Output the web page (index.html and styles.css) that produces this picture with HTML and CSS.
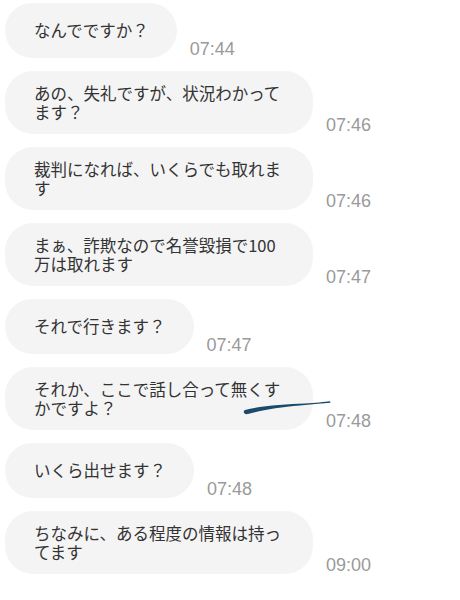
FILE: index.html
```html
<!DOCTYPE html>
<html lang="ja">
<head>
<meta charset="utf-8">
<link rel="stylesheet" href="styles.css">
</head>
<body>
<main class="chat">
  <div class="row"><div class="bubble">なんでですか？</div><time class="ts">07:44</time></div>
  <div class="row"><div class="bubble">あの、失礼ですが、状況わかってます？</div><time class="ts">07:46</time></div>
  <div class="row"><div class="bubble">裁判になれば、いくらでも取れます</div><time class="ts">07:46</time></div>
  <div class="row"><div class="bubble">まぁ、詐欺なので名誉毀損で100万は取れます</div><time class="ts">07:47</time></div>
  <div class="row"><div class="bubble">それで行きます？</div><time class="ts">07:47</time></div>
  <div class="row"><div class="bubble">それか、ここで話し合って無くすかですよ？</div><time class="ts">07:48</time></div>
  <div class="row"><div class="bubble">いくら出せます？</div><time class="ts">07:48</time></div>
  <div class="row"><div class="bubble">ちなみに、ある程度の情報は持ってます</div><time class="ts">09:00</time></div>
  <svg class="pen" width="95" height="22" viewBox="0 0 95 22" aria-hidden="true">
    <path d="M5,15 C20,11 45,9 65,8.5 C75,8 85,7 90,6.3 L90.5,7.8 C80,8.6 70,9.6 60,10.5 C40,12 22,15 8,19 C4,20 2.5,16 5,15 Z" fill="#1b4a6b"/>
  </svg>
</main>
</body>
</html>
```
FILE: styles.css
```css
html, body {
  margin: 0;
  padding: 0;
  background: #ffffff;
}
.chat {
  position: relative;
  display: flex;
  flex-direction: column;
  gap: 13px;
  padding: 3px 0 0 5px;
  width: 460px;
  height: 600px;
  box-sizing: border-box;
}
.row {
  display: flex;
  align-items: flex-end;
  gap: 13px;
}
.bubble {
  display: flex;
  align-items: center;
  box-sizing: border-box;
  max-width: 308px;
  min-height: 55px;
  padding: 12.5px 28px 12.5px 29px;
  background: #f4f4f4;
  border-radius: 28px;
  font-family: "Noto Sans CJK JP", "Noto Sans", sans-serif;
  font-size: 16.5px;
  line-height: 19px;
  color: #333333;
}
.ts {
  flex: none;
  font-family: "Liberation Sans", Arial, sans-serif;
  font-size: 18px;
  line-height: 18px;
  color: #9a9a9a;
}
.pen {
  position: absolute;
  left: 240px;
  top: 395px;
}
```
